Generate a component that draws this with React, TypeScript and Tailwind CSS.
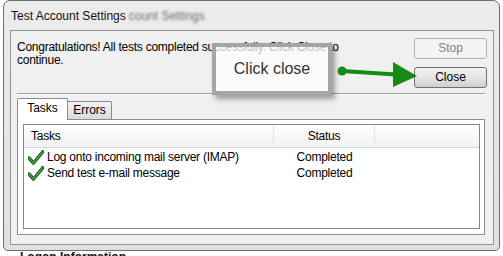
import React from 'react';

const tasks = [
    { label: 'Log onto incoming mail server (IMAP)', status: 'Completed' },
    { label: 'Send test e-mail message', status: 'Completed' },
];

// green tick used in the task list
function Check() {
    return (
        <svg width="16" height="15" viewBox="0 0 16 15" className="shrink-0">
            <path d="M1 8 L5.5 13 L15 1.5" fill="none" stroke="#1c5a1c" strokeWidth="3.4" strokeLinecap="round" strokeLinejoin="round" />
            <path d="M1 8 L5.5 13 L15 1.5" fill="none" stroke="#3c9e3c" strokeWidth="1.7" strokeLinecap="round" strokeLinejoin="round" />
        </svg>
    );
}

export default function App() {
    return (
        <div className="relative w-[503px] h-[256px] overflow-hidden bg-white text-[12px] leading-[13px] text-black font-['Liberation_Sans',sans-serif]">
            {/* Window frame */}
            <div className="ml-[3px] w-[497px] h-[251px] rounded-t-[7px] rounded-b-[5px] border border-[#6e6e6e] bg-gradient-to-b from-[#ececec] to-[#e0e0e0] flex flex-col pl-[6px] pr-[5px] pb-[5px]">
                <div className="h-[29px] flex items-center pl-[1px] pt-[1px]">
                    <span className="text-[#111]">Test Account Settings</span>
                    <span className="ml-[3px] text-[#6e6e6e] blur-[1.2px]">count Settings</span>
                </div>

                {/* Client area */}
                <div className="flex-1 border border-[#939393] bg-[#f0f0f0] flex flex-col tracking-[-0.25px]">
                    <div className="h-[62px] flex">
                        <div className="flex-1 pl-[6px] pt-[10px]">
                            Congratulations! All tests completed successfully. Click Close to
                            <br />
                            continue.
                        </div>
                        <div className="flex flex-col gap-[8px] pt-[7px] mr-[6px] tracking-normal">
                            <div className="w-[73px] h-[21px] rounded-[3px] border border-[#adb2b5] bg-[#f4f4f4] text-[#838383] flex items-center justify-center">
                                Stop
                            </div>
                            <div className="w-[73px] h-[21px] rounded-[3px] border border-[#707070] bg-gradient-to-b from-[#f2f2f2] via-[#e6e6e6] to-[#cfcfcf] flex items-center justify-center">
                                Close
                            </div>
                        </div>
                    </div>
                    <div className="ml-[6px] w-[468px] border-t border-[#a0a0a0] border-b border-b-white" />

                    {/* Tabs */}
                    <div className="mt-[3px] ml-[6px] h-[21px] flex items-end tracking-normal">
                        <div className="relative z-10 -mb-px w-[51px] h-[22px] rounded-t-[2px] border border-b-0 border-[#898c95] bg-white flex items-center justify-center pb-[3px]">
                            Tasks
                        </div>
                        <div className="w-[44px] h-[18px] rounded-tr-[2px] border border-l-0 border-b-0 border-[#898c95] bg-gradient-to-b from-[#f3f3f3] to-[#dadada] flex items-center justify-center">
                            Errors
                        </div>
                    </div>
                    <div className="ml-[6px] w-[468px] h-[116px] border border-[#898c95] bg-white pl-[5px] pt-[4px] pr-[4px] pb-[5px]">
                        <div className="w-full h-full border border-[#828790] bg-white flex flex-col">
                            <div className="h-[23px] flex bg-gradient-to-b from-white to-[#f1f2f4] border-b border-[#d5d5d5]">
                                <div className="w-[250px] border-r border-[#e2e3e6] pl-[7px] flex items-center">Tasks</div>
                                <div className="w-[101px] border-r border-[#e2e3e6] flex items-center justify-center">Status</div>
                                <div className="flex-1" />
                            </div>
                            <div className="pt-px">
                                {tasks.map((t) => (
                                    <div key={t.label} className="h-[16px] flex items-center">
                                        <div className="w-[250px] flex items-center gap-[3px] pl-[4px]">
                                            <Check />
                                            <span>{t.label}</span>
                                        </div>
                                        <div className="w-[101px] text-center">{t.status}</div>
                                    </div>
                                ))}
                            </div>
                        </div>
                    </div>
                </div>
            </div>
            <div className="pl-[20px] font-bold text-[#111]">Logon Information</div>

            {/* Annotation callout */}
            <div className="absolute left-[212px] top-[43px] w-[120px] h-[52px] border-[4px] border-[#9c9c9c]/90 bg-white/75 shadow-[3px_4px_5px_rgba(0,0,0,0.35)] flex items-center justify-center text-[16px] leading-[18px] text-[#333]">
                Click close
            </div>
            <svg className="absolute left-0 top-0 pointer-events-none" width="503" height="256">
                <circle cx="342" cy="71" r="4.5" fill="#168a16" />
                <line x1="342" y1="71" x2="396" y2="74.5" stroke="#168a16" strokeWidth="4" />
                <polygon points="393,62 417,76 393,87" fill="#168a16" />
            </svg>
        </div>
    );
}
